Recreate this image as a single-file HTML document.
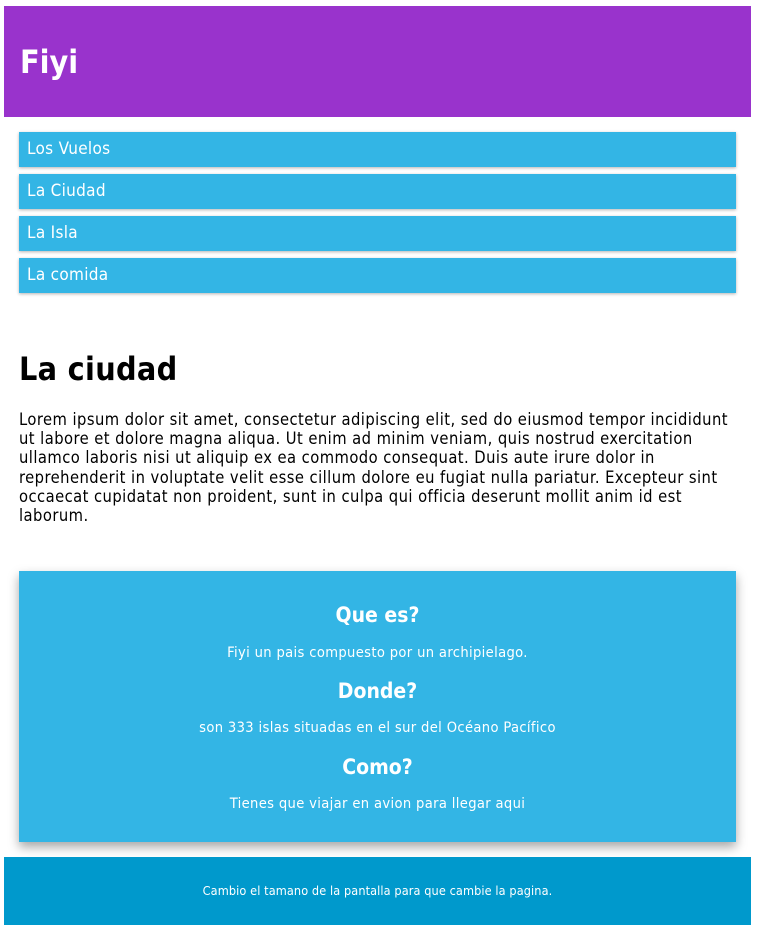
<!DOCTYPE html>
<html><head><meta charset="utf-8"><style>
body{margin:0;width:759px;height:932px;background:#fff;font-family:"DejaVu Sans Condensed","DejaVu Sans","Liberation Sans",sans-serif;position:relative;}
.hdr{position:absolute;left:4px;top:6px;width:747px;height:111px;background:#9933cc;color:#fff;}
.hdr h1{margin:0;position:absolute;left:16px;top:38px;font-size:32px;line-height:36px;font-weight:bold;}
.nav{position:absolute;left:19px;width:717px;height:35px;background:#33b5e5;color:#fff;font-size:17px;letter-spacing:0.3px;line-height:35px;box-shadow:0 1px 3px rgba(0,0,0,.3);}
.nav span{padding-left:8px;}
h2{position:absolute;left:19px;top:349px;margin:0;font-size:32px;line-height:40px;font-weight:bold;letter-spacing:0.3px;}
p.l{position:absolute;left:19px;top:410px;width:730px;margin:0;font-size:16.4px;letter-spacing:0.45px;line-height:19.2px;white-space:nowrap;}
.as{position:absolute;left:19px;top:571px;width:717px;height:271px;background:#33b5e5;color:#fff;text-align:center;box-shadow:0 5px 10px rgba(0,0,0,.35);}
.as h3{margin:0;font-size:21px;font-weight:bold;position:absolute;width:100%;line-height:26px;}
.as p{margin:0;font-size:14.6px;letter-spacing:0.35px;position:absolute;width:100%;line-height:18px;}
.ft{position:absolute;left:4px;top:857px;width:747px;height:68px;background:#0099cc;color:#fff;text-align:center;font-size:12.6px;letter-spacing:0.1px;line-height:68px;}
</style></head><body>
<div class="hdr"><h1>Fiyi</h1></div>
<div class="nav" style="top:132px"><span>Los Vuelos</span></div>
<div class="nav" style="top:174px"><span>La Ciudad</span></div>
<div class="nav" style="top:216px"><span>La Isla</span></div>
<div class="nav" style="top:258px"><span>La comida</span></div>
<h2>La ciudad</h2>
<p class="l">Lorem ipsum dolor sit amet, consectetur adipiscing elit, sed do eiusmod tempor incididunt<br>ut labore et dolore magna aliqua. Ut enim ad minim veniam, quis nostrud exercitation<br>ullamco laboris nisi ut aliquip ex ea commodo consequat. Duis aute irure dolor in<br>reprehenderit in voluptate velit esse cillum dolore eu fugiat nulla pariatur. Excepteur sint<br>occaecat cupidatat non proident, sunt in culpa qui officia deserunt mollit anim id est<br>laborum.</p>
<div class="as">
<h3 style="top:31px">Que es?</h3>
<p style="top:73px">Fiyi un pais compuesto por un archipielago.</p>
<h3 style="top:107px">Donde?</h3>
<p style="top:148px">son 333 islas situadas en el sur del Océano Pacífico</p>
<h3 style="top:183px">Como?</h3>
<p style="top:224px">Tienes que viajar en avion para llegar aqui</p>
</div>
<div class="ft">Cambio el tamano de la pantalla para que cambie la pagina.</div>
</body></html>
